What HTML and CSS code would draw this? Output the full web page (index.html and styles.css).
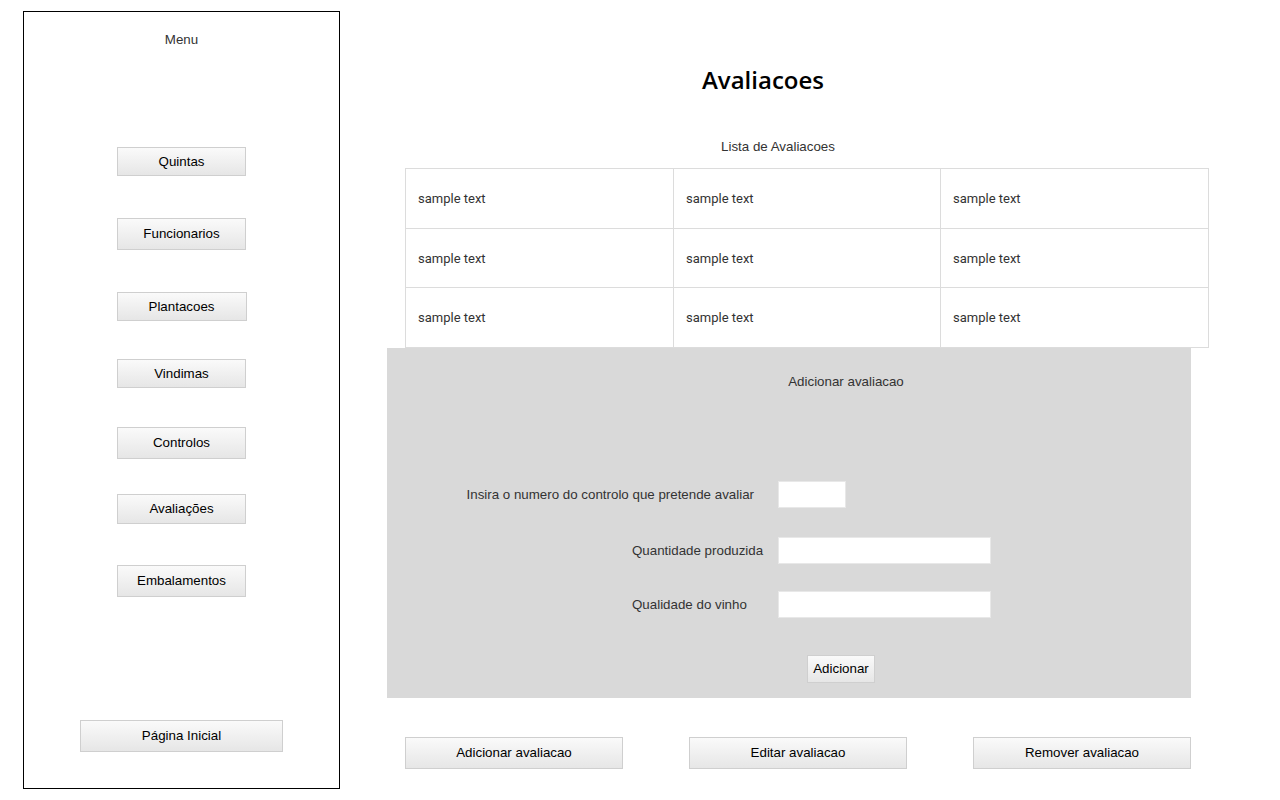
FILE: index.html
```html
<!DOCTYPE html>
<html lang="pt">
<head>
<meta charset="utf-8">
<title>Avaliacoes</title>
<link rel="stylesheet" href="styles.css">
</head>
<body>
<div class="page">
  <nav class="sidebar">
    <div class="menu-title">Menu</div>
    <button class="btn side b1">Quintas</button>
    <button class="btn side b2">Funcionarios</button>
    <button class="btn side b3">Plantacoes</button>
    <button class="btn side b4">Vindimas</button>
    <button class="btn side b5">Controlos</button>
    <button class="btn side b6">Avaliações</button>
    <button class="btn side b7">Embalamentos</button>
    <button class="btn side home">Página Inicial</button>
  </nav>
  <main class="main">
    <h1 class="title">Avaliacoes</h1>
    <div class="caption">Lista de Avaliacoes</div>
    <div class="grid">
      <div class="cell">sample text</div>
      <div class="cell">sample text</div>
      <div class="cell">sample text</div>
      <div class="cell">sample text</div>
      <div class="cell">sample text</div>
      <div class="cell">sample text</div>
      <div class="cell">sample text</div>
      <div class="cell">sample text</div>
      <div class="cell">sample text</div>
    </div>
    <section class="panel">
      <div class="panel-title">Adicionar avaliacao</div>
      <div class="row row1">
        <label class="lbl lbl-right">Insira o numero do controlo que pretende avaliar</label>
        <input class="field small" type="text">
      </div>
      <div class="row row2">
        <label class="lbl lbl-left">Quantidade produzida</label>
        <input class="field wide" type="text">
      </div>
      <div class="row row3">
        <label class="lbl lbl-left">Qualidade do vinho</label>
        <input class="field wide" type="text">
      </div>
      <div class="submit-row">
        <button class="btn submit">Adicionar</button>
      </div>
    </section>
    <div class="actions">
      <button class="btn action">Adicionar avaliacao</button>
      <button class="btn action">Editar avaliacao</button>
      <button class="btn action">Remover avaliacao</button>
    </div>
  </main>
</div>
</body>
</html>
```

FILE: styles.css
```css
* { box-sizing: border-box; }
html, body { margin: 0; padding: 0; background: #fff; }
body {
  font-family: "Liberation Sans", Arial, sans-serif;
  font-size: 13.33px;
  color: #333;
  width: 1280px;
  height: 800px;
  overflow: hidden;
}
.page {
  display: flex;
  align-items: flex-start;
  padding: 11px 0 0 23px;
}
.sidebar {
  width: 317px;
  height: 778px;
  border: 1px solid #000;
  display: flex;
  flex-direction: column;
  align-items: center;
  flex-shrink: 0;
}
.menu-title {
  margin-top: 20px;
  line-height: 16px;
  color: #333;
}
.btn {
  font-family: "Liberation Sans", Arial, sans-serif;
  font-size: 13.33px;
  color: #000;
  background: linear-gradient(#fafafa, #e6e6e6);
  border: 1px solid #cfcfcf;
  border-radius: 0;
  padding: 0;
  margin: 0;
  line-height: 16px;
}
.side { width: 129px; height: 29px; }
.b1 { margin-top: 99px; }
.b2 { margin-top: 42px; height: 32px; }
.b3 { margin-top: 42px; width: 130px; }
.b4 { margin-top: 38px; }
.b5 { margin-top: 39px; height: 32px; }
.b6 { margin-top: 35px; height: 30px; }
.b7 { margin-top: 41px; height: 32px; }
.home { margin-top: 123px; width: 203px; height: 32px; }

.main {
  display: flex;
  flex-direction: column;
  width: 940px;
}
.title {
  margin: 53px 0 0 273px;
  width: 300px;
  text-align: center;
  font-family: "Open Sans", sans-serif;
  font-weight: 600;
  font-size: 24px;
  line-height: 32px;
  color: #000;
}
.caption {
  margin: 43px 0 0 338px;
  width: 200px;
  text-align: center;
  line-height: 16px;
  color: #333;
}
.grid {
  margin: 13px 0 0 65px;
  width: 804px;
  display: grid;
  grid-template-columns: 268px 267px 268px;
  grid-template-rows: 60px 59px 60px;
  border-top: 1px solid #dcdcdc;
  border-left: 1px solid #dcdcdc;
}
.cell {
  border-right: 1px solid #dcdcdc;
  border-bottom: 1px solid #dcdcdc;
  display: flex;
  align-items: center;
  padding-left: 12px;
  font-family: Roboto, "Liberation Sans", sans-serif;
  font-size: 13px;
  color: #333;
}
.panel {
  margin: 0 0 0 47px;
  width: 804px;
  height: 350px;
  background: #d9d9d9;
  display: flex;
  flex-direction: column;
}
.panel-title {
  margin: 26px 0 0 359px;
  width: 200px;
  text-align: center;
  line-height: 16px;
  color: #333;
}
.row {
  display: flex;
  align-items: center;
  height: 27px;
}
.row1 { margin-top: 91px; }
.row2 { margin-top: 29px; }
.row3 { margin-top: 27px; }
.lbl {
  width: 367px;
  margin-right: 24px;
  line-height: 16px;
  color: #333;
  white-space: nowrap;
}
.lbl-right { text-align: right; }
.lbl-left { text-align: left; padding-left: 245px; }
.field {
  height: 27px;
  background: #fff;
  border: 1px solid #e8e8e8;
  margin: 0;
  padding: 0 4px;
  font-family: "Liberation Sans", Arial, sans-serif;
  font-size: 13px;
}
.small { width: 68px; }
.wide { width: 213px; }
.submit-row {
  display: flex;
  margin-top: 37px;
}
.submit {
  margin-left: 420px;
  width: 68px;
  height: 28px;
}
.actions {
  display: flex;
  gap: 66px;
  margin: 39px 0 0 65px;
}
.action {
  width: 218px;
  height: 32px;
}
```
